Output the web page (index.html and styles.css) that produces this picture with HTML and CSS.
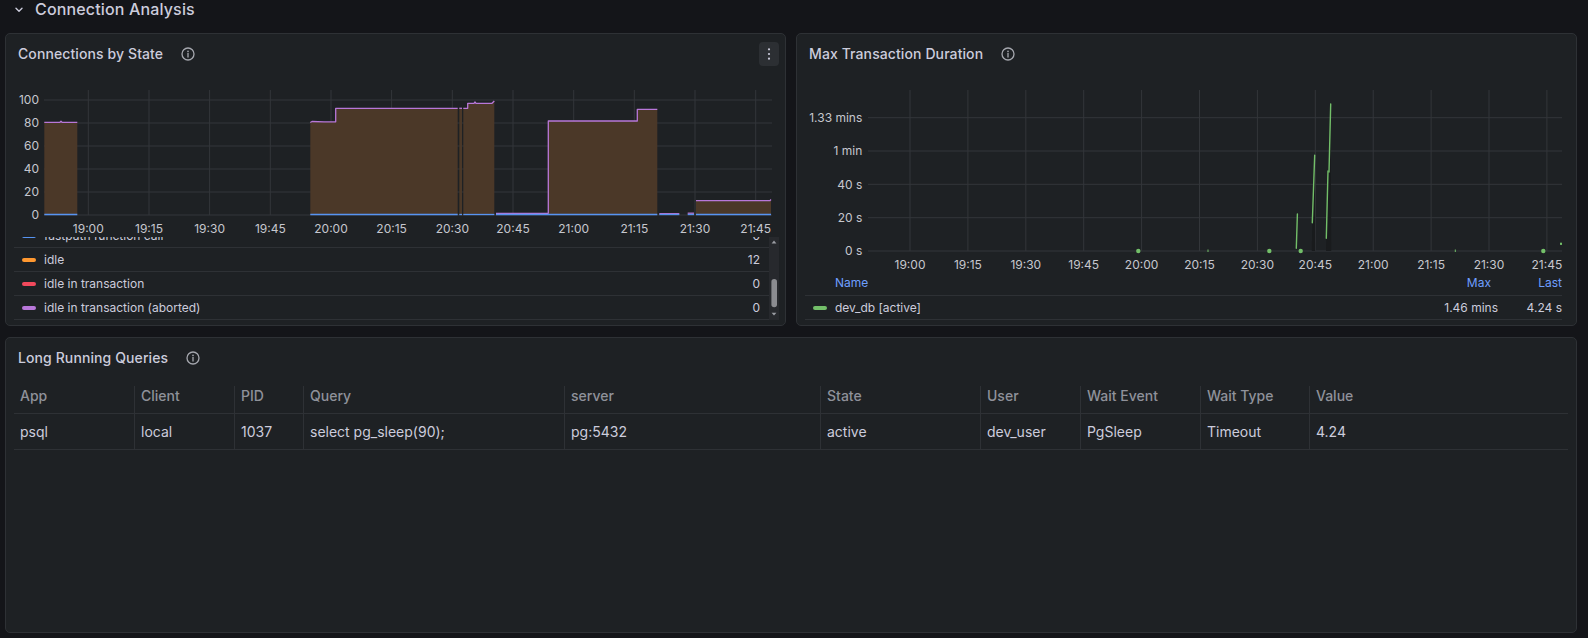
FILE: index.html
```html
<!DOCTYPE html>
<html lang="en">
<head>
<meta charset="utf-8">
<title>Connection Analysis</title>
<link rel="stylesheet" href="styles.css">
</head>
<body>
<div class="dash">
  <div class="row-header">
    <svg class="chev" viewBox="0 0 8 6"><polyline points="1,1.3 4,4.3 7,1.3" fill="none" stroke="#ccccdc" stroke-width="1.4" stroke-linecap="round" stroke-linejoin="round"/></svg>
    <span class="row-title">Connection Analysis</span>
  </div>

  <div class="top-grid">
    <section class="panel panel-top">
      <header class="panel-header">
        <h2 class="panel-title">Connections by State</h2>
        <svg class="info" viewBox="0 0 14 14"><circle cx="7" cy="7" r="6" fill="none" stroke="#a5a7ae" stroke-width="1.3"/><circle cx="7" cy="4.3" r="0.85" fill="#a5a7ae"/><path d="M7 6.4V10" stroke="#a5a7ae" stroke-width="1.3" stroke-linecap="round"/></svg>
        <button class="menu" type="button"><svg width="4" height="12" viewBox="0 0 4 12"><circle cx="2" cy="1.3" r="1.1" fill="#ccccdc"/><circle cx="2" cy="6" r="1.1" fill="#ccccdc"/><circle cx="2" cy="10.7" r="1.1" fill="#ccccdc"/></svg></button>
      </header>
      <svg class="chart" width="779" height="163" viewBox="0 0 779 163">
        <g class="grid">
          <line x1="38" y1="26" x2="766" y2="26"/>
          <line x1="38" y1="49" x2="766" y2="49"/>
          <line x1="38" y1="72" x2="766" y2="72"/>
          <line x1="38" y1="95" x2="766" y2="95"/>
          <line x1="38" y1="118" x2="766" y2="118"/>
          <line x1="38" y1="141" x2="766" y2="141"/>
          <line x1="82.3" y1="16" x2="82.3" y2="141"/>
          <line x1="143" y1="16" x2="143" y2="141"/>
          <line x1="203.6" y1="16" x2="203.6" y2="141"/>
          <line x1="264.3" y1="16" x2="264.3" y2="141"/>
          <line x1="325" y1="16" x2="325" y2="141"/>
          <line x1="385.6" y1="16" x2="385.6" y2="141"/>
          <line x1="446.3" y1="16" x2="446.3" y2="141"/>
          <line x1="507" y1="16" x2="507" y2="141"/>
          <line x1="567.7" y1="16" x2="567.7" y2="141"/>
          <line x1="628.3" y1="16" x2="628.3" y2="141"/>
          <line x1="689" y1="16" x2="689" y2="141"/>
          <line x1="749.7" y1="16" x2="749.7" y2="141"/>
        </g>
        <g class="fill-brown">
          <polygon points="38.3,141 38.3,48.3 71.3,48.3 71.3,141"/>
          <polygon points="304.3,141 304.3,48 329.7,48 329.7,34.3 451.7,34.3 451.7,141"/>
          <polygon points="453.3,141 453.3,34.3 456,34.3 456,141"/>
          <polygon points="457.3,141 457.3,34.3 461.7,34.3 461.7,29.3 486,29.3 488.3,27 488.3,141"/>
          <polygon points="490,141 490,139.3 542.3,139.3 542.3,47 631.3,47 631.3,35.3 651.3,35.3 651.3,141"/>
          <polygon points="653.3,141 653.3,139.7 673.3,139.7 673.3,141"/>
          <polygon points="681.7,141 681.7,139.2 688,139.2 688,141"/>
          <polygon points="690,141 690,126.7 764,126.7 765,125.5 765,141"/>
        </g>
        <g class="line-purple">
          <polyline points="38.3,48.3 54,48.3 55,47.3 56,48.3 71.3,48.3"/>
          <polyline points="304.3,48.5 306,47.5 318,47.8 329.7,47.8 329.7,34.3 451.7,34.3"/>
          <polyline points="453.3,34.3 456,34.3"/>
          <polyline points="457.3,34.3 461.7,34.3 461.7,29.3 468,29.3 469,28 470,29.3 486,29.3 488.3,27"/>
          <polyline points="490,139.3 542.3,139.3 542.3,47 631.3,47 631.3,35.3 651.3,35.3"/>
          <polyline points="653.3,139.7 673.3,139.7"/>
          <polyline points="681.7,139.2 688,139.2"/>
          <polyline points="690,126.7 764,126.7 765,125.5"/>
        </g>
        <g class="line-blue">
          <line x1="38.3" y1="140.5" x2="71.3" y2="140.5"/>
          <line x1="304.3" y1="140.5" x2="451.7" y2="140.5"/>
          <line x1="453.3" y1="140.5" x2="456" y2="140.5"/>
          <line x1="457.3" y1="140.5" x2="488.3" y2="140.5"/>
          <line x1="490" y1="140.5" x2="651.3" y2="140.5"/>
          <line x1="653.3" y1="140.5" x2="673.3" y2="140.5"/>
          <line x1="681.7" y1="140.5" x2="688" y2="140.5"/>
          <line x1="690" y1="140.5" x2="765" y2="140.5"/>
        </g>
        <g class="ylab">
          <text x="33" y="30.3">100</text>
          <text x="33" y="53.3">80</text>
          <text x="33" y="76.3">60</text>
          <text x="33" y="99.3">40</text>
          <text x="33" y="122.3">20</text>
          <text x="33" y="145.3">0</text>
        </g>
        <g class="xlab">
          <text x="82.3" y="159.3">19:00</text>
          <text x="143" y="159.3">19:15</text>
          <text x="203.6" y="159.3">19:30</text>
          <text x="264.3" y="159.3">19:45</text>
          <text x="325" y="159.3">20:00</text>
          <text x="385.6" y="159.3">20:15</text>
          <text x="446.3" y="159.3">20:30</text>
          <text x="507" y="159.3">20:45</text>
          <text x="567.7" y="159.3">21:00</text>
          <text x="628.3" y="159.3">21:15</text>
          <text x="689" y="159.3">21:30</text>
          <text x="749.7" y="159.3">21:45</text>
        </g>
      </svg>
      <div class="legend-scroll">
        <div class="legend-clip">
          <div class="legend-list">
            <div class="lg-row"><span class="swatch sw-blue"></span><span>fastpath function call</span><span class="lg-val">0</span></div>
            <div class="lg-row"><span class="swatch sw-orange"></span><span>idle</span><span class="lg-val">12</span></div>
            <div class="lg-row"><span class="swatch sw-red"></span><span>idle in transaction</span><span class="lg-val">0</span></div>
            <div class="lg-row"><span class="swatch sw-purple"></span><span>idle in transaction (aborted)</span><span class="lg-val">0</span></div>
          </div>
        </div>
        <svg class="scrollbar" viewBox="0 0 10 83">
          <rect x="0" y="0" width="10" height="83" fill="#27292d"/>
          <polygon points="5,3.6 7.4,6.4 2.6,6.4" fill="#9c9ea4"/>
          <rect x="2.4" y="42" width="5.6" height="28.3" rx="2.8" fill="#8b8c90"/>
          <polygon points="2.6,75.8 7.4,75.8 5,78.6" fill="#9c9ea4"/>
        </svg>
      </div>
    </section>

    <section class="panel panel-top">
      <header class="panel-header">
        <h2 class="panel-title">Max Transaction Duration</h2>
        <svg class="info" viewBox="0 0 14 14"><circle cx="7" cy="7" r="6" fill="none" stroke="#a5a7ae" stroke-width="1.3"/><circle cx="7" cy="4.3" r="0.85" fill="#a5a7ae"/><path d="M7 6.4V10" stroke="#a5a7ae" stroke-width="1.3" stroke-linecap="round"/></svg>
      </header>
      <svg class="chart" width="779" height="197" viewBox="0 0 779 197">
        <g class="grid">
          <line x1="71" y1="43.7" x2="765" y2="43.7"/>
          <line x1="71" y1="77" x2="765" y2="77"/>
          <line x1="71" y1="110.3" x2="765" y2="110.3"/>
          <line x1="71" y1="143.7" x2="765" y2="143.7"/>
          <line x1="71" y1="177" x2="765" y2="177"/>
          <line x1="113" y1="16" x2="113" y2="177"/>
          <line x1="170.9" y1="16" x2="170.9" y2="177"/>
          <line x1="228.8" y1="16" x2="228.8" y2="177"/>
          <line x1="286.7" y1="16" x2="286.7" y2="177"/>
          <line x1="344.6" y1="16" x2="344.6" y2="177"/>
          <line x1="402.5" y1="16" x2="402.5" y2="177"/>
          <line x1="460.4" y1="16" x2="460.4" y2="177"/>
          <line x1="518.3" y1="16" x2="518.3" y2="177"/>
          <line x1="576.2" y1="16" x2="576.2" y2="177"/>
          <line x1="634.1" y1="16" x2="634.1" y2="177"/>
          <line x1="692" y1="16" x2="692" y2="177"/>
          <line x1="749.9" y1="16" x2="749.9" y2="177"/>
        </g>
        <g class="fill-dark">
          <polygon points="514.8,177 515.3,148.7 517.7,81.3 518.2,177"/>
          <polygon points="529,177 529.3,164.3 531,97 532,98 533.7,30 534.2,177"/>
        </g>
        <g class="line-green">
          <line x1="499.3" y1="174.3" x2="500.4" y2="140"/>
          <line x1="515.3" y1="148.7" x2="517.7" y2="81.3"/>
          <line x1="529.3" y1="164.3" x2="531" y2="97"/>
          <line x1="532" y1="98" x2="533.7" y2="30"/>
        </g>
        <g class="dot-green">
          <circle cx="341.3" cy="177" r="2.2"/>
          <circle cx="472.3" cy="177" r="2.2"/>
          <circle cx="503.7" cy="177" r="2.2"/>
          <circle cx="746.3" cy="177" r="2.2"/>
          <rect x="410.5" y="175.5" width="1" height="2.5"/>
          <rect x="657.8" y="175.5" width="1" height="2.5"/>
          <rect x="763" y="168.7" width="2" height="2.2"/>
        </g>
        <g class="ylab">
          <text x="65.3" y="48">1.33 mins</text>
          <text x="65.3" y="81.3">1 min</text>
          <text x="65.3" y="114.6">40 s</text>
          <text x="65.3" y="148">20 s</text>
          <text x="65.3" y="181.3">0 s</text>
        </g>
        <g class="xlab">
          <text x="113" y="195.3">19:00</text>
          <text x="170.9" y="195.3">19:15</text>
          <text x="228.8" y="195.3">19:30</text>
          <text x="286.7" y="195.3">19:45</text>
          <text x="344.6" y="195.3">20:00</text>
          <text x="402.5" y="195.3">20:15</text>
          <text x="460.4" y="195.3">20:30</text>
          <text x="518.3" y="195.3">20:45</text>
          <text x="576.2" y="195.3">21:00</text>
          <text x="634.1" y="195.3">21:15</text>
          <text x="692" y="195.3">21:30</text>
          <text x="749.9" y="195.3">21:45</text>
        </g>
      </svg>
      <div class="legend-table">
        <div class="lt-head">
          <span class="lt-name lt-name-h">Name</span>
          <span class="lt-max lt-max-h">Max</span>
          <span class="lt-last">Last</span>
        </div>
        <div class="lt-row">
          <span class="lt-name"><span class="swatch sw-green"></span>dev_db [active]</span>
          <span class="lt-max">1.46 mins</span>
          <span class="lt-last">4.24 s</span>
        </div>
      </div>
    </section>
  </div>

  <section class="panel panel-queries">
    <header class="panel-header">
      <h2 class="panel-title">Long Running Queries</h2>
      <svg class="info" viewBox="0 0 14 14"><circle cx="7" cy="7" r="6" fill="none" stroke="#a5a7ae" stroke-width="1.3"/><circle cx="7" cy="4.3" r="0.85" fill="#a5a7ae"/><path d="M7 6.4V10" stroke="#a5a7ae" stroke-width="1.3" stroke-linecap="round"/></svg>
    </header>
    <div class="qtable">
      <div class="qh">App</div>
      <div class="qh">Client</div>
      <div class="qh">PID</div>
      <div class="qh">Query</div>
      <div class="qh">server</div>
      <div class="qh">State</div>
      <div class="qh">User</div>
      <div class="qh">Wait Event</div>
      <div class="qh">Wait Type</div>
      <div class="qh">Value</div>
      <div class="qd">psql</div>
      <div class="qd">local</div>
      <div class="qd">1037</div>
      <div class="qd">select pg_sleep(90);</div>
      <div class="qd">pg:5432</div>
      <div class="qd">active</div>
      <div class="qd">dev_user</div>
      <div class="qd">PgSleep</div>
      <div class="qd">Timeout</div>
      <div class="qd">4.24</div>
    </div>
  </section>
</div>
</body>
</html>
```

FILE: styles.css
```css
* { box-sizing: border-box; }

html, body {
  margin: 0;
  padding: 0;
}

body {
  width: 1588px;
  height: 638px;
  overflow: hidden;
  background: #141519;
  color: #ccccdc;
  font-family: Inter, "Noto Sans", "Liberation Sans", sans-serif;
}

.dash {
  padding: 0 11px 0 5px;
}

.row-header {
  height: 19px;
  margin-bottom: 14px;
  padding-left: 10px;
  display: flex;
  align-items: center;
}

.chev {
  width: 8px;
  height: 6px;
  margin-right: 12px;
  flex-shrink: 0;
}

.row-title {
  font-size: 16px;
  font-weight: 500;
  line-height: 19px;
  letter-spacing: 0.15px;
  color: #ccccdc;
}

.top-grid {
  display: grid;
  grid-template-columns: 781px 781px;
  column-gap: 10px;
}

.panel {
  background: #1e2124;
  border: 1px solid #2e3135;
  border-radius: 5px;
}

.panel-top {
  height: 293px;
  display: flex;
  flex-direction: column;
}

.panel-queries {
  height: 296px;
  margin-top: 11px;
}

.panel-header {
  height: 40px;
  flex-shrink: 0;
  display: flex;
  align-items: center;
  padding: 0 6px 0 12px;
}

.panel-title {
  margin: 0;
  font-size: 14px;
  font-weight: 500;
  line-height: 16px;
  letter-spacing: 0.1px;
  color: #ccccdc;
}

.info {
  width: 14px;
  height: 14px;
  margin-left: 18px;
  flex-shrink: 0;
}

.menu {
  margin-left: auto;
  width: 20px;
  height: 24px;
  padding: 0;
  border: 0;
  border-radius: 4px;
  background: #2c2f33;
  display: flex;
  align-items: center;
  justify-content: center;
}

.chart {
  display: block;
  flex-shrink: 0;
}

.chart text {
  font-family: Inter, "Noto Sans", sans-serif;
  font-size: 12px;
  fill: #c6c7ce;
}

.chart .ylab text { text-anchor: end; }
.chart .xlab text { text-anchor: middle; }

.grid line {
  stroke: #33363a;
  stroke-width: 1;
}

.fill-brown polygon { fill: #4b3828; }
.fill-dark polygon { fill: #191b1d; }

.line-purple polyline {
  fill: none;
  stroke: #b877d9;
  stroke-width: 1.3;
  stroke-linejoin: round;
}

.line-blue line {
  stroke: #5794f2;
  stroke-width: 1.3;
}

.line-green line {
  stroke: #73bf69;
  stroke-width: 1.4;
  stroke-linecap: round;
}

.dot-green circle,
.dot-green rect { fill: #73bf69; }

/* Legend with scroll (panel 1) */
.legend-scroll {
  display: flex;
  height: 83px;
  margin: 0 6px 0 8px;
  flex-shrink: 0;
}

.legend-clip {
  flex: 1;
  overflow: hidden;
}

.legend-list {
  margin-top: -13px;
}

.lg-row {
  height: 24px;
  border-bottom: 1px solid #2e3135;
  display: flex;
  align-items: center;
  padding: 0 9px 0 8px;
  font-size: 12px;
  line-height: 14px;
  color: #ccccdc;
}

.lg-val { margin-left: auto; }

.swatch {
  display: inline-block;
  width: 14px;
  height: 4px;
  border-radius: 2px;
  margin-right: 8px;
  flex-shrink: 0;
}

.sw-blue { background: #5794f2; }
.sw-orange { background: #ff9830; }
.sw-red { background: #f2495c; }
.sw-purple { background: #b877d9; }
.sw-green { background: #73bf69; }

.scrollbar {
  display: block;
  width: 10px;
  height: 83px;
  flex-shrink: 0;
}

/* Legend table (panel 2) */
.legend-table {
  margin: 0 14px 0 8px;
  font-size: 12px;
  line-height: 14px;
}

.lt-head {
  height: 25px;
  border-bottom: 1px solid #2e3135;
  display: flex;
  align-items: center;
  color: #6e9fff;
}

.lt-row {
  height: 24px;
  border-bottom: 1px solid #2e3135;
  display: flex;
  align-items: center;
  color: #ccccdc;
}

.lt-name {
  flex: 1;
  display: flex;
  align-items: center;
  padding-left: 8px;
}

.lt-name-h { padding-left: 30px; }

.lt-max {
  width: 78px;
  text-align: right;
}

.lt-max-h { padding-right: 7px; }

.lt-last {
  width: 64px;
  text-align: right;
}

/* Query table (panel 3) */
.qtable {
  display: grid;
  grid-template-columns: 120px 100px 69px 261px 256px 160px 100px 120px 109px 1fr;
  margin: 8px 8px 0;
  font-size: 14px;
  line-height: 16px;
}

.qh {
  height: 28px;
  padding: 2px 6px 0;
  border-bottom: 1px solid #2e3135;
  border-left: 1px solid #2e3135;
  color: #8f919a;
  font-weight: 500;
  white-space: nowrap;
}

.qd {
  height: 36px;
  display: flex;
  align-items: center;
  padding: 0 6px;
  border-bottom: 1px solid #2e3135;
  border-left: 1px solid #2e3135;
  color: #ccccdc;
  white-space: nowrap;
}

.qh:nth-child(10n+1),
.qd:nth-child(10n+1) {
  border-left: 0;
}
```
